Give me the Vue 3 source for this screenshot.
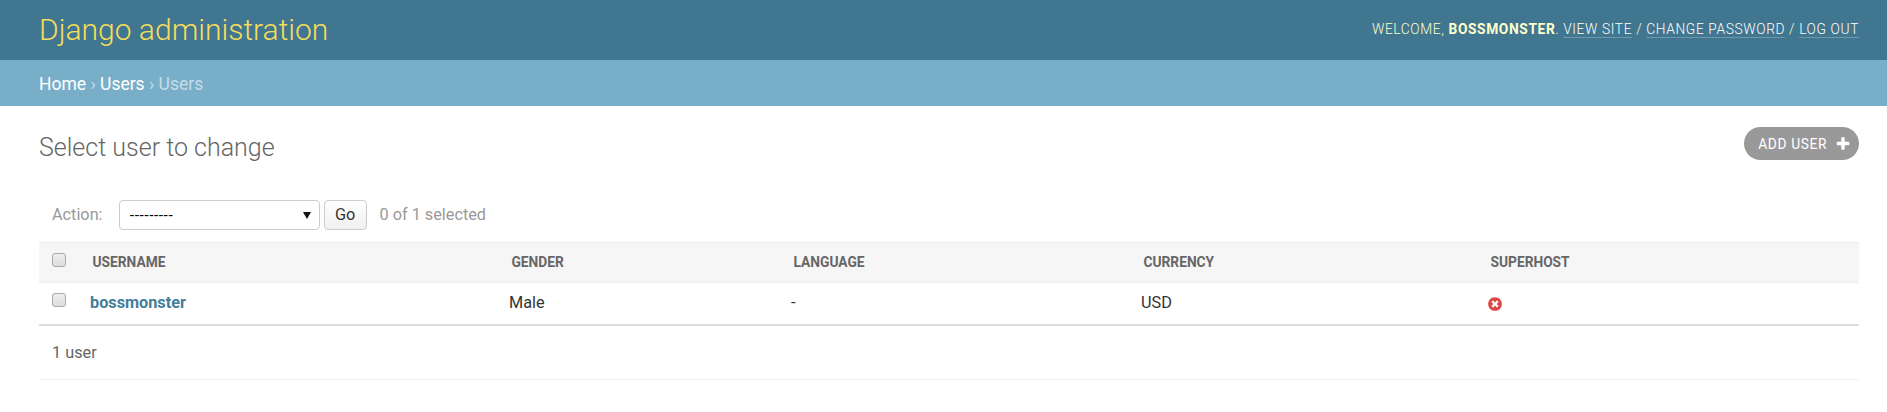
<script setup>
const columns = ['Username', 'Gender', 'Language', 'Currency', 'Superhost']
</script>

<template>
  <div class="page">
    <header class="header">
      <h1 class="brand">Django administration</h1>
      <div class="tools">
        Welcome, <strong>bossmonster</strong>.
        <a>View site</a> / <a>Change password</a> / <a>Log out</a>
      </div>
    </header>
    <nav class="crumbs">
      <a>Home</a> › <a>Users</a> › Users
    </nav>
    <main class="content">
      <div class="title-row">
        <h1 class="title">Select user to change</h1>
        <a class="add">
          Add user
          <svg class="plus" viewBox="0 0 1792 1792"><path fill="#fff" d="M1600 736v192q0 40-28 68t-68 28h-416v416q0 40-28 68t-68 28h-192q-40 0-68-28t-28-68v-416h-416q-40 0-68-28t-28-68v-192q0-40 28-68t68-28h416v-416q0-40 28-68t68-28h192q40 0 68 28t28 68v416h416q40 0 68 28t28 68z"/></svg>
        </a>
      </div>
      <div class="actions">
        <label class="action-label">Action:</label>
        <div class="select">
          <span>---------</span>
          <svg class="arrow" viewBox="0 0 8 8"><path d="M0 1h8L4 8z" fill="#111"/></svg>
        </div>
        <button class="go">Go</button>
        <span class="counter">0 of 1 selected</span>
      </div>
      <table class="table">
        <thead>
          <tr>
            <th class="check"><input type="checkbox" class="box" /></th>
            <th v-for="c in columns" :key="c"><span>{{ c }}</span></th>
          </tr>
        </thead>
        <tbody>
          <tr>
            <td class="check"><input type="checkbox" class="box" /></td>
            <td><a class="user">bossmonster</a></td>
            <td>Male</td>
            <td>-</td>
            <td>USD</td>
            <td>
              <svg class="no" viewBox="0 0 1792 1792"><path fill="#dd4646" d="M1277 1122q0-26-19-45l-181-181 181-181q19-19 19-45 0-27-19-46l-90-90q-19-19-46-19-26 0-45 19l-181 181-181-181q-19-19-45-19-27 0-46 19l-90 90q-19 19-19 46 0 26 19 45l181 181-181 181q-19 19-19 45 0 27 19 46l90 90q19 19 46 19 26 0 45-19l181-181 181 181q19 19 45 19 27 0 46-19l90-90q19-19 19-46zm387-226q0 209-103 385.5t-279.5 279.5-385.5 103-385.5-103-279.5-279.5-103-385.5 103-385.5 279.5-279.5 385.5-103 385.5 103 279.5 279.5 103 385.5z"/></svg>
            </td>
          </tr>
        </tbody>
      </table>
      <p class="paginator"><span class="num">1</span> user</p>
    </main>
  </div>
</template>

<style>
html, body { margin: 0; background: #fff; }
</style>

<style scoped>
.page {
  font-family: Roboto, "Liberation Sans", sans-serif;
  font-size: 14px;
  color: #333;
}
.header {
  height: 60px;
  box-sizing: border-box;
  padding: 0 28px 0 39px;
  background: #417690;
  display: flex;
  justify-content: space-between;
  align-items: center;
}
.brand {
  margin: 0 0 2px;
  font-size: 30px;
  font-weight: 300;
  color: #f5dd5d;
}
.tools {
  margin-bottom: 2px;
  font-size: 13.75px;
  font-weight: 300;
  letter-spacing: 0.625px;
  text-transform: uppercase;
  color: #ffc;
}
.tools strong { font-weight: 700; }
.tools a {
  color: #fff;
  border-bottom: 1px solid rgba(255, 255, 255, 0.25);
}
.crumbs {
  height: 46px;
  box-sizing: border-box;
  padding: 2px 39px 0;
  background: #79aec8;
  color: #c4dce8;
  font-size: 17.5px;
  font-weight: 400;
  display: flex;
  align-items: center;
  white-space: pre;
}
.crumbs a { color: #fff; }
.content {
  padding: 20px 28px 0 39px;
}
.title-row {
  display: flex;
  justify-content: space-between;
  align-items: flex-start;
  height: 74px;
}
.title {
  margin: 6px 0 0;
  font-size: 25px;
  font-weight: 300;
  color: #666;
  line-height: 32px;
}
.add {
  display: flex;
  align-items: center;
  gap: 8px;
  height: 33px;
  margin-top: 1px;
  box-sizing: border-box;
  padding: 0 8px 0 14px;
  border-radius: 17px;
  background: #999;
  color: #fff;
  font-size: 13.75px;
  letter-spacing: 0.625px;
  text-transform: uppercase;
}
.plus { width: 16px; height: 16px; }
.actions {
  display: flex;
  align-items: center;
  height: 30px;
  margin-bottom: 12px;
  padding-left: 13px;
  color: #999;
}
.action-label { font-size: 16.25px; margin-right: 16px; padding-bottom: 2px; }
.select {
  width: 201px;
  height: 30px;
  box-sizing: border-box;
  border: 1px solid #ccc;
  border-radius: 4px;
  background: #fff;
  color: #000;
  font-family: "Liberation Sans", sans-serif;
  font-size: 14.5px;
  padding: 0 10px;
  display: flex;
  align-items: center;
  justify-content: space-between;
}
.arrow { width: 8px; height: 8px; margin-right: -2px; }
.go {
  margin-left: 4px;
  width: 43px;
  height: 30px;
  border: 1px solid #ccc;
  border-radius: 4px;
  background: linear-gradient(#fff, #f0f0f0);
  color: #333;
  font: 400 16.25px Roboto, sans-serif;
  padding: 0 0 2px;
}
.counter { margin-left: 13px; font-size: 16.25px; padding-bottom: 1px; }
.table {
  width: 100%;
  table-layout: fixed;
  border-collapse: collapse;
  border-top: 1px solid #eee;
}
th {
  height: 40px;
  box-sizing: border-box;
  padding: 0 0 2px 10.5px;
  background: #f6f6f6;
  border-bottom: 1px solid #eee;
  text-align: left;
  font-size: 13.75px;
  font-weight: 700;
  color: #666;
  text-transform: uppercase;
}
td {
  height: 42px;
  box-sizing: border-box;
  padding: 0 0 2px 8px;
  border-bottom: 2px solid #ddd;
  font-size: 16.25px;
}
th:nth-child(1) { width: 43px; }
th:nth-child(2) { width: 419px; }
th:nth-child(3) { width: 282px; }
th:nth-child(4) { width: 350px; }
th:nth-child(5) { width: 347px; }
th.check, td.check { padding: 0 0 0 13px; }
.box {
  appearance: none;
  display: block;
  width: 14px;
  height: 14px;
  margin: -6px 0 0;
  border: 1px solid #aaa;
  border-radius: 3px;
  background: linear-gradient(#eee, #ddd);
}
.user { color: #447e9b; font-weight: 700; }
.no { display: block; width: 16px; height: 16px; margin: 3px 0 0 -1px; }
.paginator {
  margin: 0;
  height: 54px;
  box-sizing: border-box;
  padding-left: 13px;
  display: flex;
  align-items: center;
  border-bottom: 1px solid #eee;
  color: #666;
  font-size: 16.25px;
  white-space: pre;
}
.num { color: #666; }
</style>
